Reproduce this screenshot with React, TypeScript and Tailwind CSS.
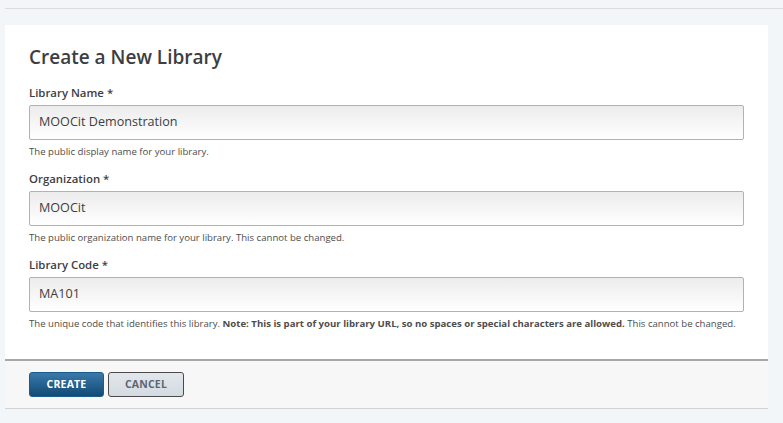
import React from 'react';

const fields = [
  {
    label: 'Library Name',
    value: 'MOOCit Demonstration',
    help: <>The public display name for your library.</>,
  },
  {
    label: 'Organization',
    value: 'MOOCit',
    help: <>The public organization name for your library. This cannot be changed.</>,
  },
  {
    label: 'Library Code',
    value: 'MA101',
    help: (
      <>
        The unique code that identifies this library.{' '}
        <strong className="font-bold">
          Note: This is part of your library URL, so no spaces or special characters are allowed.
        </strong>{' '}
        This cannot be changed.
      </>
    ),
  },
];

export default function App() {
  return (
    <div
      className="w-[783px] h-[423px] overflow-hidden bg-[#f3f6f9] pl-[5px] pr-[15px] pt-[8px]"
      style={{ fontFamily: '"Open Sans", "Liberation Sans", sans-serif' }}
    >
      <div className="border-t border-[#dcdcdc] -mr-[15px]" />
      <div className="mt-[16px] w-full bg-white">
        {/* Form body */}
        <div className="px-[24px] pt-[19px] pb-[29px]">
          <h2 className="text-[19px] leading-[26px] font-semibold text-[#3d3e3f]">
            Create a New Library
          </h2>
          <div className="mt-[15px] flex flex-col gap-[13px]">
            {fields.map((f) => (
              <div key={f.label}>
                <label className="block text-[11.4px] leading-[16px] font-semibold text-[#3d3e3f] mb-[4px]">
                  {f.label} *
                </label>
                <div className="w-[715px] h-[35px] flex items-center px-[9px] border border-[#b2b2b2] rounded-[2px] bg-gradient-to-b from-[#ececec] to-white text-[12.6px] text-[#3d3e3f]">
                  {f.value}
                </div>
                <p className="mt-[5px] text-[9.6px] leading-[13px] text-[#4d4d4d]">{f.help}</p>
              </div>
            ))}
          </div>
        </div>

        {/* Actions */}
        <div className="h-[50px] border-t-2 border-[#a8a8a8] border-b border-b-[#d2d2d2] bg-[#f7f7f7] px-[24px] flex items-center gap-[4px]">
          <button className="w-[75px] h-[25px] rounded-[3px] border border-[#1a5a8c] bg-gradient-to-b from-[#3a79aa] to-[#104b76] text-white text-[10.5px] font-bold tracking-[0.2px]">
            CREATE
          </button>
          <button className="w-[76px] h-[25px] rounded-[3px] border border-[#4a4a4a] bg-gradient-to-b from-[#e2e7ec] to-[#d3dae1] text-[#5d6670] text-[10.5px] font-bold tracking-[0.2px]">
            CANCEL
          </button>
        </div>
      </div>
    </div>
  );
}
